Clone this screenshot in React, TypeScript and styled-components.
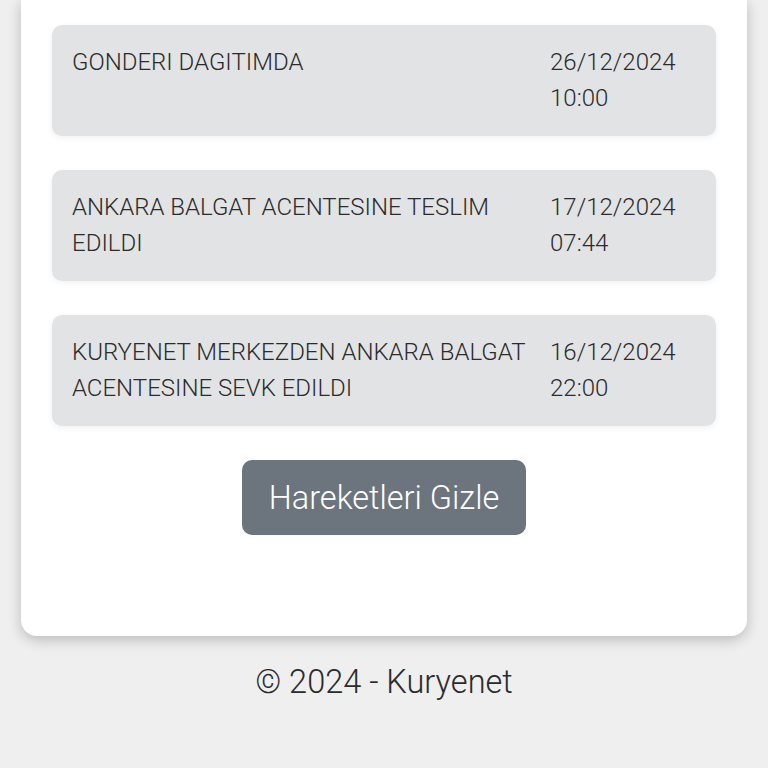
import React from "react";
import styled, { createGlobalStyle } from "styled-components";

const GlobalStyle = createGlobalStyle`
  html, body {
    margin: 0;
    padding: 0;
    background: #efefef;
    font-family: Roboto, "Liberation Sans", sans-serif;
    color: #333;
  }
`;

const Page = styled.div`
  display: flex;
  flex-direction: column;
  padding: 0 21px;
`;

const Card = styled.div`
  background: #fff;
  border-radius: 0 0 16px 16px;
  box-shadow: 0 4px 14px rgba(0, 0, 0, 0.22);
  padding: 25px 31px 101px;
  display: flex;
  flex-direction: column;
  gap: 34px;
`;

const Item = styled.div`
  background: #e2e3e5;
  border-radius: 10px;
  box-shadow: 0 2px 6px rgba(0, 0, 0, 0.06);
  padding: 19px 20px 20px;
  display: grid;
  grid-template-columns: 478px 1fr;
  font-size: 24px;
  line-height: 36px;
  font-weight: 300;
  color: #2b2b2b;
  min-height: 72px;
`;

const Status = styled.div`
  padding-right: 12px;
`;

const Stamp = styled.div`
  display: flex;
  flex-direction: column;
`;

const Button = styled.button`
  align-self: center;
  width: 284px;
  height: 75px;
  background: #6c757d;
  color: #fff;
  border: none;
  border-radius: 10px;
  font-family: inherit;
  font-size: 32.5px;
  font-weight: 300;
  cursor: pointer;
`;

const Footer = styled.footer`
  text-align: center;
  font-size: 32.5px;
  font-weight: 300;
  line-height: 36px;
  margin-top: 28px;
  color: #2b2b2b;
`;

const moves = [
  { status: "GONDERI DAGITIMDA", date: "26/12/2024", time: "10:00" },
  { status: "ANKARA BALGAT ACENTESINE TESLIM EDILDI", date: "17/12/2024", time: "07:44" },
  { status: "KURYENET MERKEZDEN ANKARA BALGAT ACENTESINE SEVK EDILDI", date: "16/12/2024", time: "22:00" },
];

export default function App() {
  return (
    <>
      <GlobalStyle />
      <Page>
        <Card>
          {moves.map((m) => (
            <Item key={m.date}>
              <Status>{m.status}</Status>
              <Stamp>
                <span>{m.date}</span>
                <span>{m.time}</span>
              </Stamp>
            </Item>
          ))}
          <Button>Hareketleri Gizle</Button>
        </Card>
        <Footer>© 2024 - Kuryenet</Footer>
      </Page>
    </>
  );
}
